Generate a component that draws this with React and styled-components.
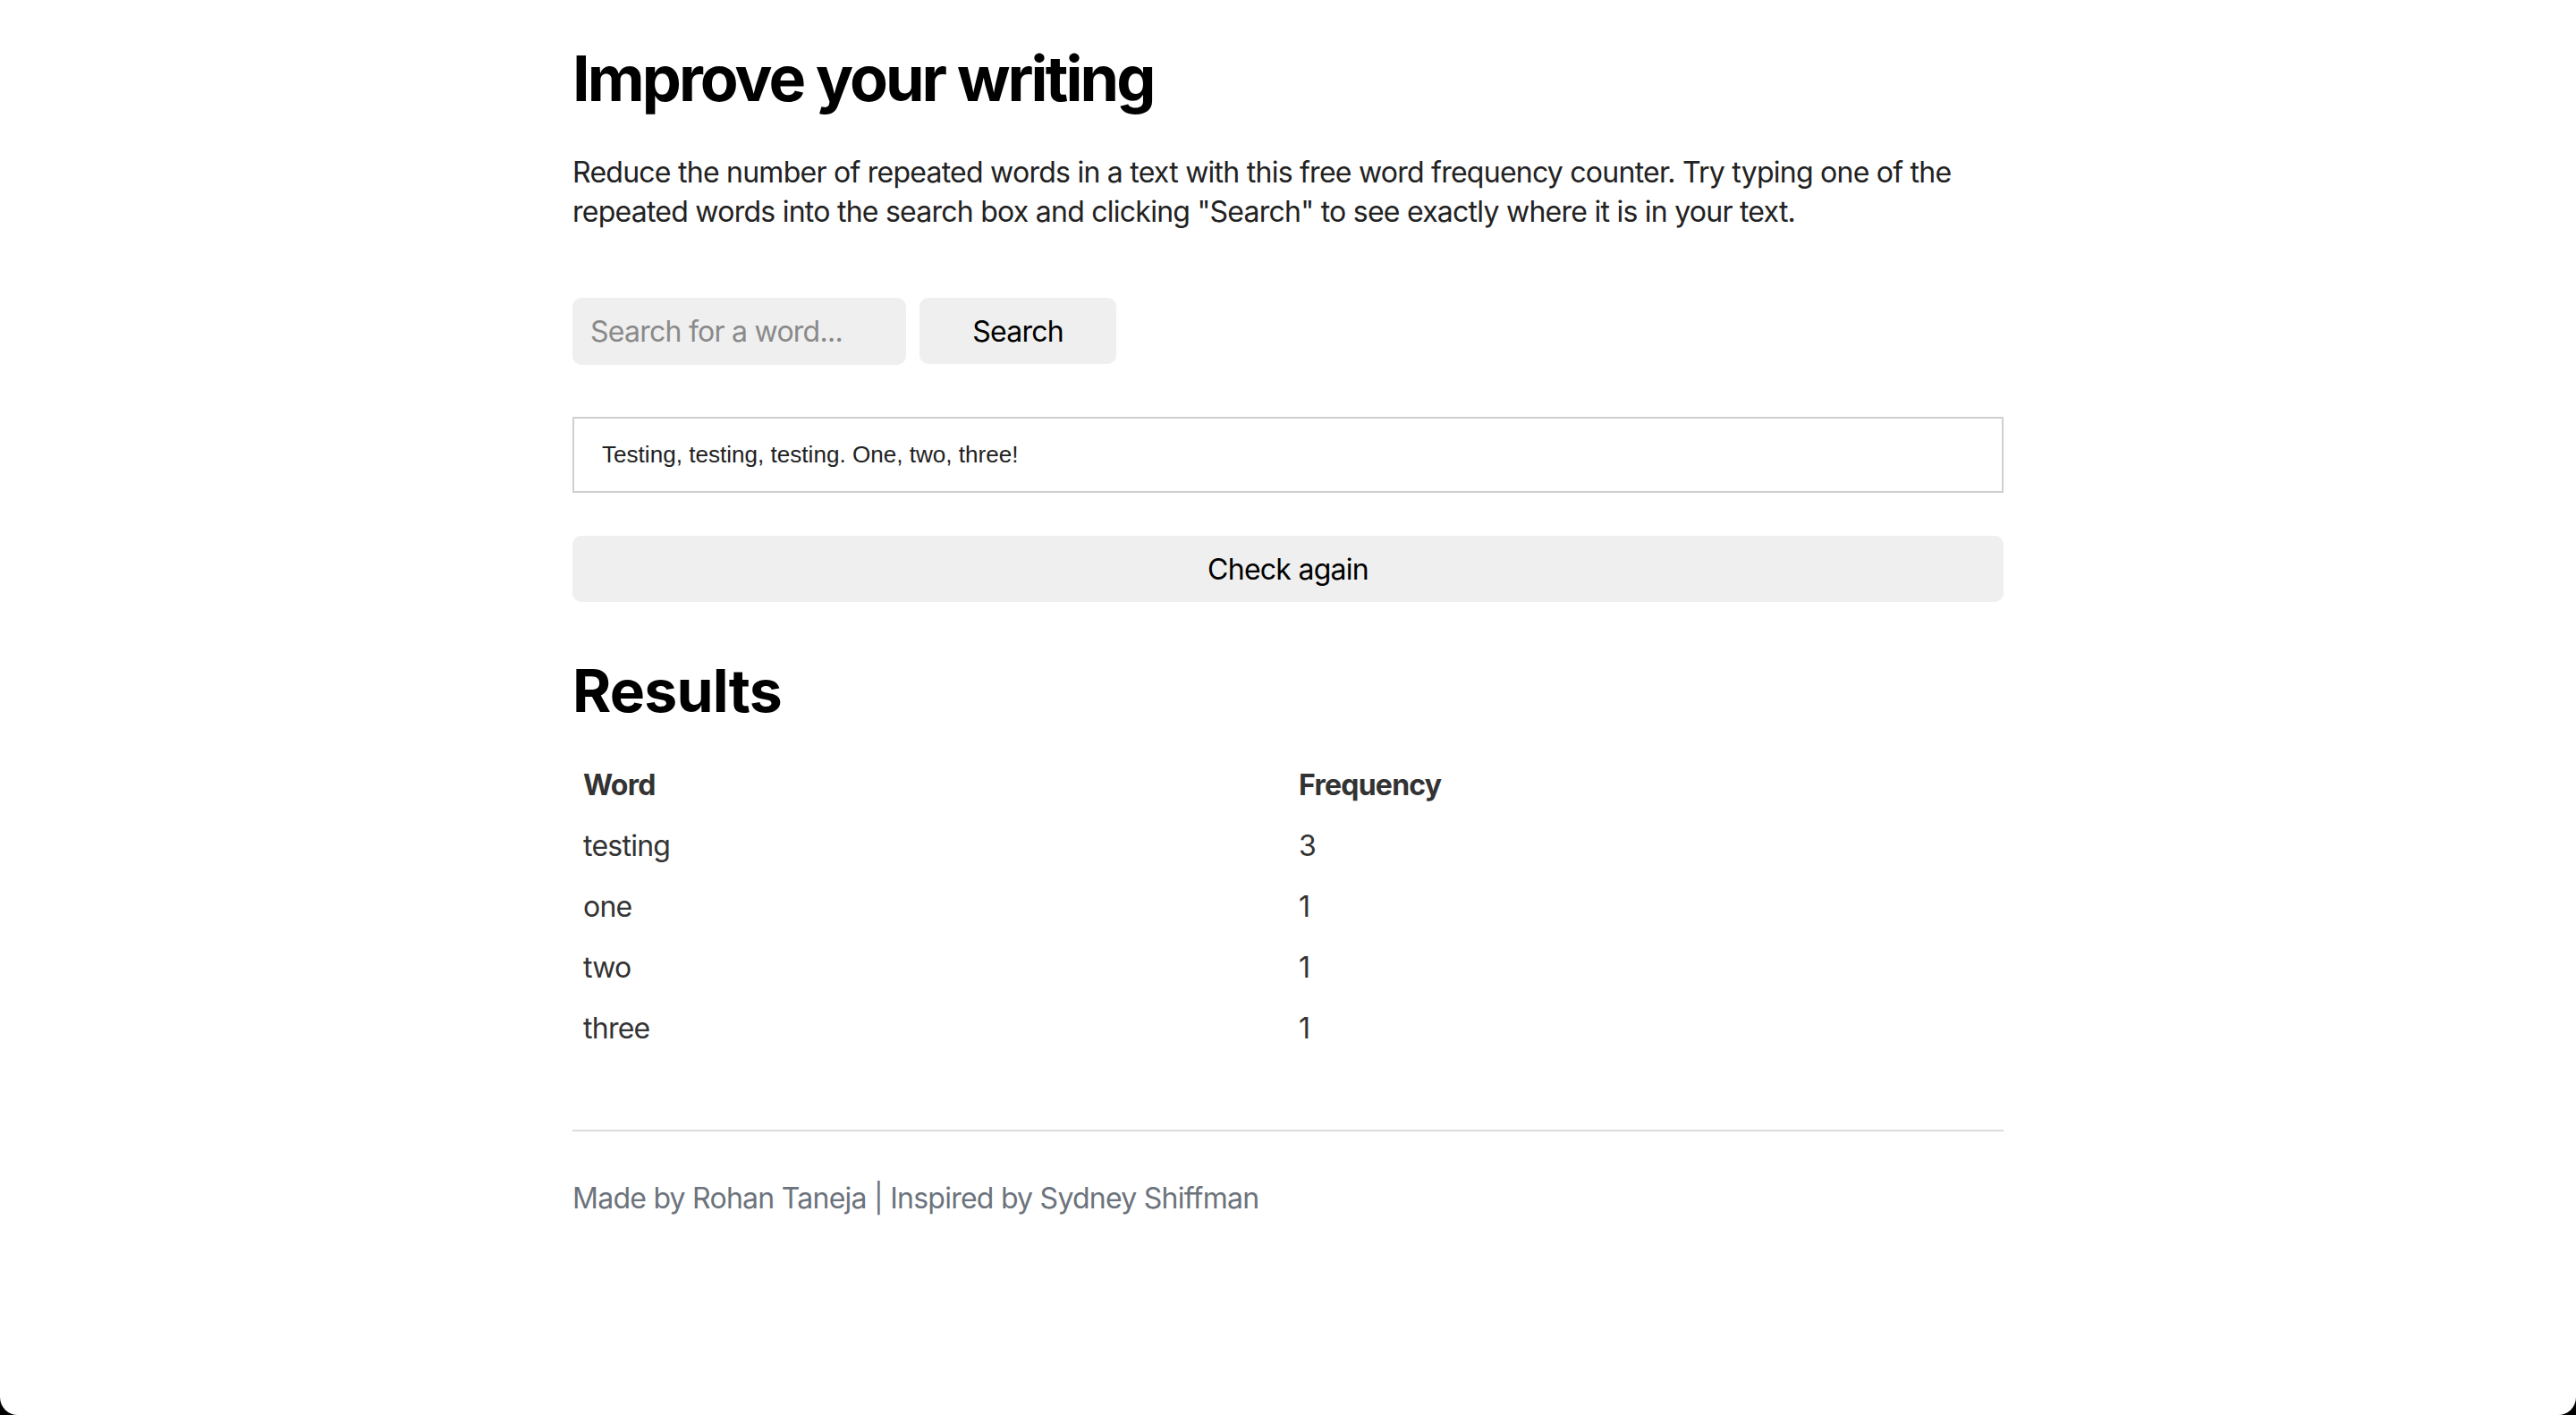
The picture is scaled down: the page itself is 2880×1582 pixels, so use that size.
import React from 'react';
import styled, { createGlobalStyle } from 'styled-components';

const GlobalStyle = createGlobalStyle`
  html, body {
    margin: 0;
    padding: 0;
    background: #000;
  }
  body {
    font-family: Inter, "Noto Sans", "Liberation Sans", sans-serif;
  }
  * {
    box-sizing: border-box;
  }
`;

const results = [
  { word: 'testing', count: 3 },
  { word: 'one', count: 1 },
  { word: 'two', count: 1 },
  { word: 'three', count: 1 },
];

const Page = styled.div`
  background: #fff;
  min-height: 100vh;
  border-radius: 0 0 20px 20px;
  padding-top: 46px;
`;

const Container = styled.main`
  max-width: 1600px;
  margin: 0 auto;
  letter-spacing: -0.75px;
`;

const Title = styled.h1`
  margin: 0;
  font-size: 70px;
  line-height: 84px;
  font-weight: 700;
  letter-spacing: -2.9px;
  color: #000;
`;

const Intro = styled.p`
  margin: 41px 0 0;
  font-size: 32px;
  line-height: 44px;
  color: #222;
`;

const SearchRow = styled.div`
  display: flex;
  gap: 15px;
  margin-top: 74px;
`;

const SearchInput = styled.input`
  width: 373px;
  height: 75px;
  border: none;
  border-radius: 10px;
  background: #efefef;
  padding: 0 20px;
  font-family: inherit;
  font-size: 32px;
  letter-spacing: -0.75px;
  color: #000;
  outline: none;

  &::placeholder {
    color: #8a8a8a;
  }
`;

const Button = styled.button`
  width: ${(p) => (p.$full ? '100%' : '220px')};
  height: 74px;
  margin-top: ${(p) => p.$top || 0};
  border: none;
  border-radius: 10px;
  background: #efefef;
  font-family: inherit;
  font-size: 32px;
  letter-spacing: -0.75px;
  color: #000;
  cursor: pointer;
  display: block;
`;

const TextBox = styled.div`
  margin-top: 58px;
  height: 85px;
  border: 2px solid #cfcfcf;
  padding: 0 31px;
  display: flex;
  align-items: center;
  font-family: "Liberation Sans", Arial, sans-serif;
  font-size: 26.1px;
  letter-spacing: 0;
  color: #222;
`;

const SubTitle = styled.h2`
  margin: 59px 0 0;
  font-size: 66px;
  line-height: 80px;
  font-weight: 700;
  letter-spacing: -0.8px;
  color: #000;
`;

const Table = styled.table`
  width: 100%;
  margin-top: 32px;
  border-collapse: collapse;
  table-layout: fixed;
  font-size: 32px;
  line-height: 44px;
  color: #333;

  th, td {
    text-align: left;
    padding: 12px;
  }

  th {
    font-weight: 700;
  }
`;

const Divider = styled.hr`
  margin: 79px 0 0;
  border: none;
  border-top: 2px solid #dcdcdc;
`;

const Footer = styled.footer`
  margin-top: 53px;
  font-size: 32px;
  line-height: 44px;
  color: #6c737c;
`;

export default function App() {
  return (
    <Page>
      <GlobalStyle />
      <Container>
        <Title>Improve your writing</Title>
        <Intro>
          Reduce the number of repeated words in a text with this free word frequency counter. Try typing one of the
          repeated words into the search box and clicking "Search" to see exactly where it is in your text.
        </Intro>

        <SearchRow>
          <SearchInput placeholder="Search for a word..." />
          <Button>Search</Button>
        </SearchRow>

        <TextBox>Testing, testing, testing. One, two, three!</TextBox>

        <Button $full $top="48px">Check again</Button>

        <SubTitle>Results</SubTitle>
        <Table>
          <thead>
            <tr>
              <th>Word</th>
              <th>Frequency</th>
            </tr>
          </thead>
          <tbody>
            {results.map((r) => (
              <tr key={r.word}>
                <td>{r.word}</td>
                <td>{r.count}</td>
              </tr>
            ))}
          </tbody>
        </Table>

        <Divider />
        <Footer>Made by Rohan Taneja | Inspired by Sydney Shiffman</Footer>
      </Container>
    </Page>
  );
}
